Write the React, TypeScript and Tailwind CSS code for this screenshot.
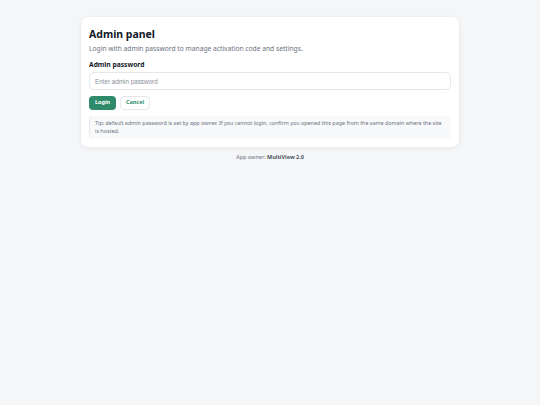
import React, { useState } from 'react';

export default function App() {
  const [password, setPassword] = useState('');

  return (
    <div className="min-h-screen w-full bg-[#f5f6f8] pt-[17px]" style={{ fontFamily: '"Noto Sans", "Open Sans", sans-serif' }}>
      <div className="mx-auto w-[378px] rounded-[7px] bg-white px-2 pt-[10px] pb-2 shadow-[0_1px_4px_rgba(15,23,42,0.08)]">
        <h1 className="text-[10.5px] leading-[14px] font-bold text-[#111827]">Admin panel</h1>
        <p className="mt-[3px] text-[6.7px] leading-[10px] text-[#6b7280]">
          Login with admin password to manage activation code and settings.
        </p>

        <label className="mt-[6px] block text-[6.7px] leading-[10px] font-bold text-[#111827]">Admin password</label>
        <input
          type="password"
          value={password}
          onChange={(e) => setPassword(e.target.value)}
          placeholder="Enter admin password"
          className="mt-[2px] block h-[18px] w-full rounded-[5px] border border-[#e5e7eb] px-[5px] text-[6.3px] text-[#111827] outline-none placeholder:text-[#8b9099]"
          style={{ fontFamily: '"Liberation Sans", Arial, sans-serif' }}
        />

        <div className="mt-[6px] flex gap-[4px]">
          <button className="h-[14px] w-[27px] rounded-[4px] bg-[#2e8b6a] text-[5.5px] leading-none font-bold text-white">
            Login
          </button>
          <button className="h-[14px] w-[30px] rounded-[4px] border border-[#e5e7eb] bg-white text-[5.5px] leading-none font-bold text-[#2e8b6a]">
            Cancel
          </button>
        </div>

        <div className="mt-[6px] rounded-[4px] border-l border-[#e5e7eb] bg-[#f8f9fa] px-[5px] pt-[4px] pb-[4px] text-[5.4px] leading-[7.5px] text-[#6b7280]">
          Tip: default admin password is set by app owner. If you cannot login, confirm you opened this page from the same domain where the site is hosted.
        </div>
      </div>

      <div className="mt-[6px] text-center text-[5.5px] leading-[9px] text-[#6b7280]">
        App owner: <span className="font-bold text-[#4b5563]">MultiView 2.0</span>
      </div>
    </div>
  );
}
